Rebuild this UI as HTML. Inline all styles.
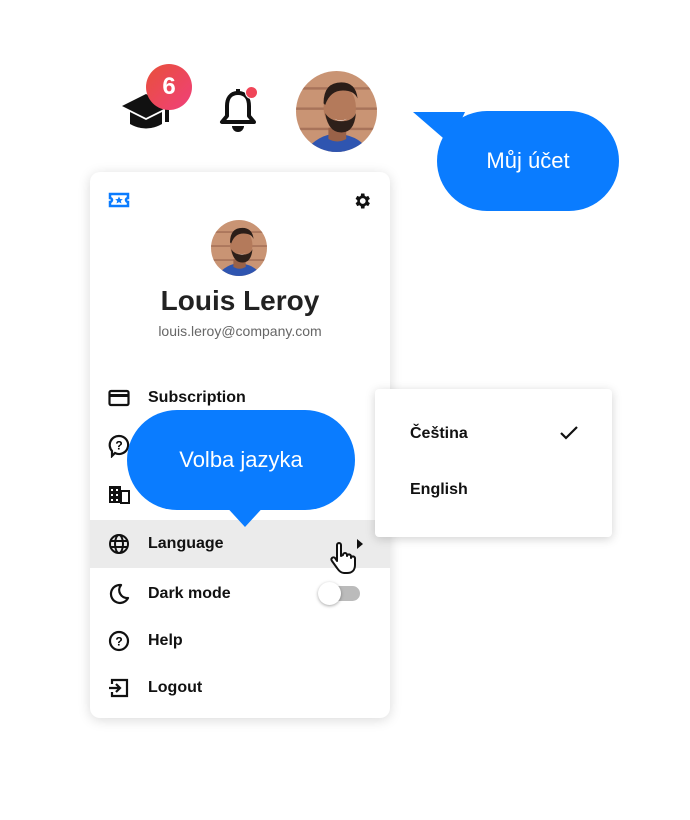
<!DOCTYPE html>
<html><head><meta charset="utf-8"><style>
*{margin:0;padding:0;box-sizing:border-box}
body{width:690px;height:820px;background:#fff;position:relative;overflow:hidden;font-family:"Liberation Sans",sans-serif;color:#111}
.abs{position:absolute}
.card{left:90px;top:172px;width:300px;height:546px;border-radius:10px;background:#fff;box-shadow:0 2px 12px rgba(0,0,0,.15)}
.row{position:absolute;left:0;width:300px;height:48px;display:flex;align-items:center;font-weight:bold;font-size:16px}
.row svg{position:absolute;left:18px}
.row span{position:absolute;left:58px}
.bub{background:#0a7cff;color:#fff;font-size:22px;display:flex;align-items:center;justify-content:center;border-radius:50px}
</style></head><body>
<svg width="0" height="0" style="position:absolute"><defs>
<clipPath id="c"><circle cx="50" cy="50" r="50"/></clipPath>
<g id="face" clip-path="url(#c)">
<rect width="100" height="100" fill="#c99474"/>
<rect x="0" y="20" width="100" height="3" fill="#a8735a"/><rect x="0" y="45" width="100" height="3" fill="#a8735a"/><rect x="0" y="70" width="100" height="3" fill="#a8735a"/>
<path d="M10 100 q20-25 45-22 q25 3 35 22z" fill="#2f55b0"/>
<path d="M40 70 h22 v14 q-11 6-22 0z" fill="#9a6248"/>
<ellipse cx="54" cy="45" rx="20" ry="27" fill="#b47a5b"/>
<path d="M34 40 q0-26 22-26 q18 0 20 20 q-4-10-18-10 q-16 0-22 18z" fill="#2a1d18"/>
<path d="M36 52 q4 24 20 24 q16 0 18-24 q-4 10-18 10 q-14 0-20-10z" fill="#2e201a"/>
<path d="M47 59 q8 5 16 0 q-8 4-16 0z" fill="#fff"/>
</g></defs></svg>
<!-- top icons -->
<svg class="abs" style="left:120px;top:88px" width="56" height="44" viewBox="0 0 56 44"><path d="M2 18 L26 6 L50 18 L26 30Z" fill="#111"/><path d="M10 24 v12 q16 9 32 0 v-12 l-16 8z" fill="#111"/><rect x="45" y="18" width="4" height="16" fill="#111"/></svg>
<div class="abs" style="left:146px;top:64px;width:46px;height:46px;border-radius:50%;background:linear-gradient(135deg,#e8503a,#f0407a);color:#fff;font-size:24px;font-weight:bold;display:flex;align-items:center;justify-content:center">6</div>
<svg class="abs" style="left:218px;top:88px" width="40" height="46" viewBox="0 0 40 46"><path d="M20 5 c-8 0-11 6-11 13 v10 l-5 6 h32 l-5-6 v-10 c0-7-3-13-11-13z" fill="none" stroke="#111" stroke-width="4" stroke-linejoin="round"/><rect x="18" y="1" width="4" height="5" fill="#111"/><path d="M14 38 a6 6 0 0 0 12 0z" fill="#111"/></svg>
<div class="abs" style="left:245px;top:86px;width:13px;height:13px;border-radius:50%;background:#f04558;border:1px solid #fff"></div>
<svg class="abs" style="left:296px;top:71px" width="81" height="81" viewBox="0 0 100 100"><use href="#face"/></svg>
<!-- bubble 1 -->
<svg class="abs" style="left:410px;top:108px" width="60" height="40"><path d="M3 4 L55 4 L40 36Z" fill="#0a7cff"/></svg>
<div class="abs bub" style="left:437px;top:111px;width:182px;height:100px">Můj účet</div>
<!-- card -->
<div class="abs card">
<svg class="abs" style="left:18px;top:20px" width="22" height="16" viewBox="0 0 22 16"><path d="M2 2h18v4a2 2 0 0 0 0 4v4H2v-4a2 2 0 0 0 0-4z" fill="none" stroke="#0a7cff" stroke-width="2.5"/><path d="M11 4.5l1.2 2.5 2.6.2-2 1.7.7 2.6-2.5-1.4-2.5 1.4.7-2.6-2-1.7 2.6-.2z" fill="#0a7cff"/></svg>
<svg class="abs" style="left:262px;top:19px" width="20" height="20" viewBox="0 0 24 24"><path fill="#111" d="M19.4 13a7.5 7.5 0 0 0 0-2l2.1-1.6-2-3.5-2.5 1a7 7 0 0 0-1.7-1L14.9 3h-4l-.4 2.9a7 7 0 0 0-1.7 1l-2.5-1-2 3.5L6.4 11a7.5 7.5 0 0 0 0 2l-2.1 1.6 2 3.5 2.5-1a7 7 0 0 0 1.7 1l.4 2.9h4l.4-2.9a7 7 0 0 0 1.7-1l2.5 1 2-3.5zM12.9 15.5a3.5 3.5 0 1 1 0-7 3.5 3.5 0 0 1 0 7z"/></svg>
<svg class="abs" style="left:121px;top:48px" width="56" height="56" viewBox="0 0 100 100"><use href="#face"/></svg>
<div class="abs" style="left:0;top:113px;width:300px;text-align:center;font-size:28px;font-weight:bold;color:#222">Louis Leroy</div>
<div class="abs" style="left:0;top:151px;width:300px;text-align:center;font-size:14px;color:#666">louis.leroy@company.com</div>
<div class="row" style="top:202px"><svg width="22" height="22" viewBox="0 0 22 22"><rect x="1.5" y="4" width="19" height="14" rx="1.5" fill="none" stroke="#111" stroke-width="2.2"/><rect x="1.5" y="7" width="19" height="3" fill="#111"/></svg><span>Subscription</span></div>
<div class="row" style="top:250px"><svg width="22" height="24" viewBox="0 0 22 24"><path d="M11 2a9 9 0 1 1-4 17l-3 3v-5a9 9 0 0 1 7-15z" fill="none" stroke="#111" stroke-width="2.2"/><text x="11" y="15.5" font-size="12" text-anchor="middle" font-weight="bold" font-family="Liberation Sans">?</text></svg></div>
<div class="row" style="top:298px"><svg width="22" height="20" viewBox="0 0 22 20"><rect x="1" y="2" width="12" height="17" fill="#111"/><rect x="13" y="7" width="8" height="12" fill="none" stroke="#111" stroke-width="2"/><g fill="#fff"><rect x="3" y="5" width="2" height="2"/><rect x="8" y="5" width="2" height="2"/><rect x="3" y="10" width="2" height="2"/><rect x="8" y="10" width="2" height="2"/><rect x="3" y="15" width="2" height="2"/><rect x="8" y="15" width="2" height="2"/></g></svg></div>
<div class="row" style="top:348px;background:#ebebeb"><svg width="22" height="22" viewBox="0 0 22 22"><g fill="none" stroke="#111" stroke-width="2"><circle cx="11" cy="11" r="9"/><ellipse cx="11" cy="11" rx="4" ry="9"/><path d="M2 8h18M2 14h18"/></g></svg><span>Language</span>
<svg style="left:266px" width="8" height="10"><path d="M1 0l6 5-6 5z" fill="#111"/></svg>
<svg style="left:238px;top:22px" width="30" height="34" viewBox="0 0 30 34"><path d="M9 3a2 2 0 0 1 4 0v11l2-1a2 2 0 0 1 4 0v1a2 2 0 0 1 4 1v1a2 2 0 0 1 4 1v6c0 5-3 8-8 8h-3c-3 0-5-2-7-5l-5-7a2 2 0 0 1 3-3l2 3z" fill="#fff" stroke="#111" stroke-width="2" stroke-linejoin="round"/></svg></div>
<div class="row" style="top:398px"><svg width="22" height="22" viewBox="0 0 22 22"><path d="M13 2a9 9 0 1 0 7 13A8 8 0 0 1 13 2z" fill="none" stroke="#111" stroke-width="2.2" stroke-linejoin="round"/></svg><span>Dark mode</span>
<div style="position:absolute;left:232px;top:16px;width:38px;height:15px;border-radius:8px;background:#bbb"></div>
<div style="position:absolute;left:228px;top:12px;width:23px;height:23px;border-radius:50%;background:#fff;box-shadow:0 1px 3px rgba(0,0,0,.35)"></div></div>
<div class="row" style="top:445px"><svg width="22" height="22" viewBox="0 0 22 22"><circle cx="11" cy="11" r="9" fill="none" stroke="#111" stroke-width="2.2"/><text x="11" y="15.5" font-size="12" text-anchor="middle" font-weight="bold" font-family="Liberation Sans">?</text></svg><span>Help</span></div>
<div class="row" style="top:492px"><svg width="22" height="22" viewBox="0 0 22 22"><path d="M4 7V3h15v16H4v-4" fill="none" stroke="#111" stroke-width="2.2"/><path d="M1 11h11M8 7l4 4-4 4" fill="none" stroke="#111" stroke-width="2.2"/></svg><span>Logout</span></div>
</div>
<!-- bubble 2 -->
<svg class="abs" style="left:220px;top:500px" width="50" height="30"><path d="M2 2h46L25 27z" fill="#0a7cff"/></svg>
<div class="abs bub" style="left:127px;top:410px;width:228px;height:100px">Volba jazyka</div>
<!-- submenu -->
<div class="abs" style="left:375px;top:389px;width:237px;height:148px;background:#fff;border-radius:4px;box-shadow:0 2px 10px rgba(0,0,0,.18)">
<div class="abs" style="left:35px;top:36px;font-size:16px;font-weight:bold">Čeština</div>
<svg class="abs" style="left:184px;top:36px" width="20" height="16"><path d="M2 8l5 5L18 2" fill="none" stroke="#111" stroke-width="2.2"/></svg>
<div class="abs" style="left:35px;top:92px;font-size:16px;font-weight:bold">English</div>
</div>
</body></html>
